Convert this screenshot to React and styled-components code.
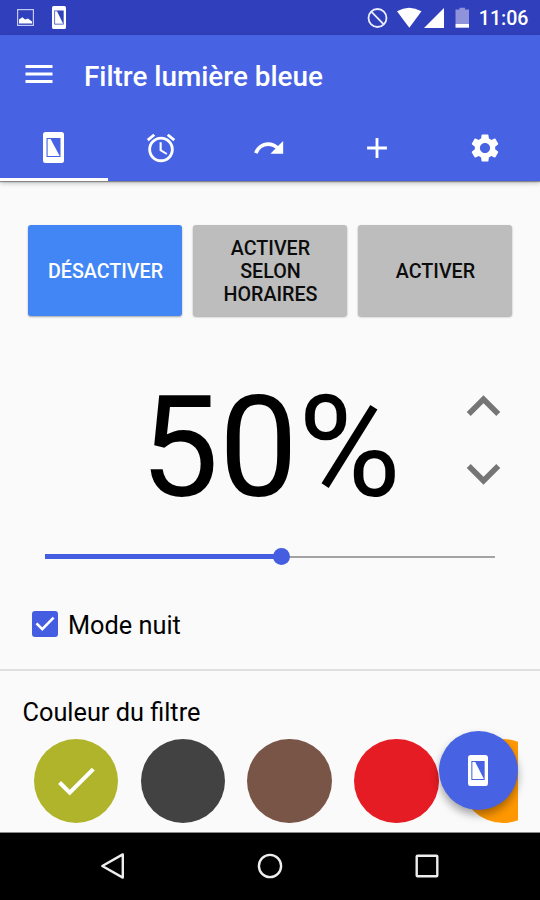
import styled, { createGlobalStyle } from "styled-components"
import { MdAdd, MdAlarm, MdCheck, MdExpandLess, MdExpandMore, MdMenu, MdRedo, MdSettings } from "react-icons/md"

const filterColors = ["#afb42b", "#424242", "#795548", "#e51c23", "#ff9800"]

const tabs = [
    { id: "filter", icon: <PhoneIcon width={21} height={31} /> },
    { id: "schedule", icon: <MdAlarm size={34} /> },
    { id: "redo", icon: <MdRedo size={34} /> },
    { id: "add", icon: <MdAdd size={34} /> },
    { id: "settings", icon: <MdSettings size={34} /> },
]

export default function App() {
    const level = 52.7
    return (
        <Screen>
            <GlobalStyle />
            <StatusBar />
            <Header>
                <TitleRow>
                    <MdMenu size={36} />
                    <h1>Filtre lumière bleue</h1>
                </TitleRow>
                <Tabs>
                    {tabs.map((tab, i) => <Tab key={tab.id} $active={i === 0}>{tab.icon}</Tab>)}
                </Tabs>
            </Header>
            <Content>
                <ButtonRow>
                    <ModeButton $primary>Désactiver</ModeButton>
                    <ModeButton>Activer selon horaires</ModeButton>
                    <ModeButton>Activer</ModeButton>
                </ButtonRow>
                <LevelRow>
                    <LevelValue>50%</LevelValue>
                    <Stepper>
                        <MdExpandLess size={67} />
                        <MdExpandMore size={67} />
                    </Stepper>
                </LevelRow>
                <Slider>
                    <SliderFill style={{ width: `${level}%` }} />
                    <SliderThumb />
                    <SliderTrack />
                </Slider>
                <CheckRow>
                    <CheckBox>
                        <svg width="26" height="26" viewBox="0 0 26 26">
                            <path d="M4.5 12.3L10.3 18.2L21.6 6.6" />
                        </svg>
                    </CheckBox>
                    <span>Mode nuit</span>
                </CheckRow>
                <ColorSection>
                    <h2>Couleur du filtre</h2>
                    <ColorList>
                        {filterColors.map((color, i) => (
                            <ColorDot key={color} $color={color}>{i === 0 && <MdCheck size={50} />}</ColorDot>
                        ))}
                    </ColorList>
                </ColorSection>
            </Content>
            <Fab><PhoneIcon width={20} height={31} /></Fab>
            <NavBar />
        </Screen>
    )
}

function StatusBar() {
    return (
        <StatusContainer>
            <StatusGroup $gap={18}>
                <svg width="17" height="17" viewBox="0 0 17 17">
                    <rect x="0.6" y="0.6" width="15.8" height="15.8" fill="none" stroke="#c3c8f3" strokeWidth="1.2" />
                    <path d="M2 14.5V10.5L5.5 8.2L8 10.5L11 9.5L15 12.5V14.5Z" fill="#fff" />
                </svg>
                <PhoneIcon width={14} height={23} />
            </StatusGroup>
            <StatusGroup $gap={0}>
                <svg width="108" height="24" viewBox="0 0 108 24">
                    <circle cx="12.5" cy="12" r="9" fill="none" stroke="#eceefc" strokeWidth="1.8" />
                    <path d="M6.3 5.6L18.7 18.4" stroke="#eceefc" strokeWidth="1.8" />
                    <path d="M32 5.2Q44 -1.8 56.5 5.2L44.3 21.8Z" fill="#fff" />
                    <path d="M59 22L79 2V22Z" fill="#fff" />
                    <path d="M90.5 3.5H94.5V1.7H100V3.5H104V18H90.5Z" fill="#8f94da" />
                    <path d="M90.5 18H104V21.7H90.5Z" fill="#fff" />
                </svg>
                <Clock>11:06</Clock>
            </StatusGroup>
        </StatusContainer>
    )
}

function PhoneIcon({ width, height }) {
    return (
        <svg width={width} height={height} viewBox="0 0 21 31" preserveAspectRatio="none">
            <path fill="#fff" fillRule="evenodd" d="M2.5 0H18.5Q21 0 21 2.5V28.5Q21 31 18.5 31H2.5Q0 31 0 28.5V2.5Q0 0 2.5 0ZM3.5 6V25H17.5V6Z" />
            <path fill="#fff" d="M4.6 7H7.6L16.7 24H4.6Z" />
        </svg>
    )
}

function NavBar() {
    return (
        <NavContainer>
            <svg width="26" height="30" viewBox="0 0 26 30">
                <path d="M2.3 15L22.8 3.4V26.6Z" />
            </svg>
            <svg width="26" height="30" viewBox="0 0 26 30">
                <circle cx="13" cy="15" r="11.1" />
            </svg>
            <svg width="26" height="30" viewBox="0 0 26 30">
                <rect x="2.7" y="4.7" width="20.6" height="20.6" rx="0.8" />
            </svg>
        </NavContainer>
    )
}

const GlobalStyle = createGlobalStyle`
    * {
        box-sizing: border-box;
    }
    body {
        margin: 0;
        font-family: Roboto, "Liberation Sans", sans-serif;
    }
    svg {
        display: block;
        flex-shrink: 0;
    }
    h1, h2 {
        margin: 0;
    }
`
const Screen = styled.div`
    position: relative;
    display: flex;
    flex-direction: column;
    width: 540px;
    height: 900px;
    overflow: hidden;
    background: #fafafa;
`
const StatusContainer = styled.div`
    display: flex;
    justify-content: space-between;
    height: 35px;
    padding: 0 11.5px 0 17px;
    background: #303fbb;
    color: #fff;
`
const StatusGroup = styled.div`
    display: flex;
    align-items: center;
    gap: ${({ $gap }) => $gap}px;
`
const Clock = styled.span`
    margin-left: 6px;
    padding-top: 3px;
    font-size: 19.6px;
    font-weight: 500;
    line-height: 24px;
`
const Header = styled.header`
    height: 146px;
    flex-shrink: 0;
    background: #4763e4;
    color: #fff;
    box-shadow: 0 1px 1px rgba(0, 0, 0, 0.35), 0 2px 5px rgba(0, 0, 0, 0.25);
`
const TitleRow = styled.div`
    display: flex;
    align-items: center;
    gap: 27px;
    height: 78px;
    padding-left: 21px;
    h1 {
        padding-top: 5px;
        font-size: 27.9px;
        font-weight: 500;
    }
`
const Tabs = styled.nav`
    display: grid;
    grid-template-columns: repeat(5, 1fr);
    height: 68px;
`
const Tab = styled.div`
    display: flex;
    align-items: center;
    justify-content: center;
    border-bottom: 3px solid ${({ $active }) => $active ? "#fff" : "transparent"};
    padding: 4px 2px 0 0;
`
const Content = styled.main`
    display: flex;
    flex-direction: column;
    flex: 1;
    padding-top: 44px;
`
const ButtonRow = styled.div`
    display: grid;
    grid-template-columns: repeat(3, 1fr);
    gap: 11px;
    height: 91px;
    padding: 0 28px;
`
const ModeButton = styled.button`
    border: 0;
    border-radius: 3px;
    padding: 2px 18px 0 19px;
    background: ${({ $primary }) => $primary ? "#4285f4" : "#bdbdbd"};
    color: ${({ $primary }) => $primary ? "#fff" : "#0c0c0c"};
    box-shadow: 0 1px 2px rgba(0, 0, 0, 0.35);
    font: 500 19.7px/23px Roboto, "Liberation Sans", sans-serif;
    text-transform: uppercase;
`
const LevelRow = styled.div`
    display: flex;
    justify-content: space-between;
    height: 164px;
    margin-top: 48px;
    padding: 0 23px 0 140px;
`
const LevelValue = styled.div`
    padding-top: 2px;
    font-size: 140.5px;
    line-height: 164px;
    color: #000;
`
const Stepper = styled.div`
    display: flex;
    flex-direction: column;
    padding-top: 9px;
    color: #757575;
`
const Slider = styled.div`
    display: flex;
    align-items: center;
    height: 18px;
    margin: 19.5px 45px 0;
`
const SliderFill = styled.div`
    height: 5px;
    background: #455de0;
`
const SliderThumb = styled.div`
    width: 17px;
    height: 17px;
    flex-shrink: 0;
    margin: 0 -9px;
    border-radius: 50%;
    background: #455de0;
    z-index: 1;
`
const SliderTrack = styled.div`
    flex: 1;
    height: 2px;
    background: #a3a3a3;
`
const CheckRow = styled.label`
    display: flex;
    align-items: center;
    gap: 10px;
    height: 105px;
    padding: 14px 32px 0;
    border-bottom: 2px solid #e0e0e0;
    font-size: 25.3px;
    line-height: 30px;
    color: #000;
    span:last-child {
        padding-top: 3px;
    }
`
const CheckBox = styled.span`
    width: 26px;
    height: 26px;
    border-radius: 3px;
    background: #455de0;
    path {
        fill: none;
        stroke: #fff;
        stroke-width: 2.6;
    }
`
const ColorSection = styled.section`
    padding: 27px 22.5px 0;
    h2 {
        font-size: 25.3px;
        font-weight: 400;
        line-height: 30px;
        color: #000;
    }
`
const ColorList = styled.div`
    display: flex;
    gap: 22.3px;
    margin-top: 11px;
    padding-left: 11.3px;
    overflow: hidden;
`
const ColorDot = styled.div`
    display: flex;
    align-items: center;
    justify-content: center;
    flex-shrink: 0;
    width: 84.5px;
    height: 84.5px;
    border-radius: 50%;
    background: ${({ $color }) => $color};
    color: #fff;
`
// floats over the colour list
const Fab = styled.button`
    position: absolute;
    right: 22.5px;
    bottom: 90px;
    display: flex;
    align-items: center;
    justify-content: center;
    width: 79px;
    height: 79px;
    padding: 0;
    border: 0;
    border-radius: 50%;
    background: #4763e4;
    box-shadow: 0 5px 9px rgba(0, 0, 0, 0.35);
`
const NavContainer = styled.nav`
    display: flex;
    align-items: center;
    justify-content: center;
    gap: 131.3px;
    height: 68px;
    padding-bottom: 1px;
    flex-shrink: 0;
    border-top: 1px solid #8a8a8a;
    background: #000;
    svg {
        fill: none;
        stroke: #eee;
        stroke-width: 2.4;
        stroke-linejoin: round;
    }
`
